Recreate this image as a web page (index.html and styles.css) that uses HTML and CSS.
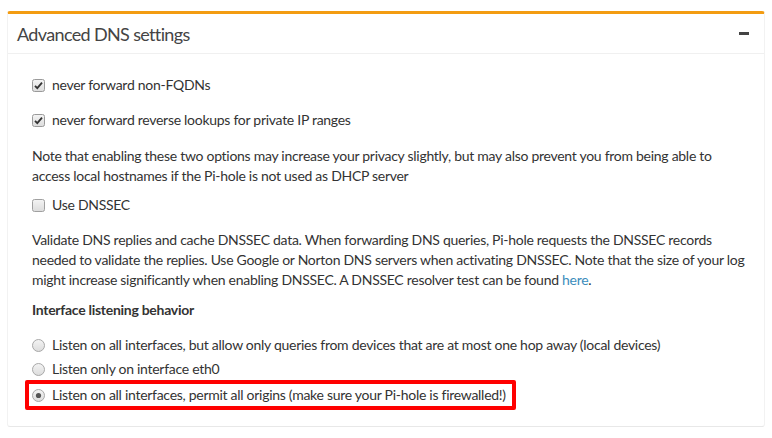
FILE: index.html
```html
<!DOCTYPE html>
<html>
<head>
<meta charset="utf-8">
<link rel="stylesheet" href="styles.css">
</head>
<body>
<div class="box">
  <div class="box-header">
    <h3 class="box-title">Advanced DNS settings</h3>
    <span class="collapse-btn"></span>
  </div>
  <div class="box-body">
    <div class="check row1">
      <svg class="cb" width="13" height="13" viewBox="0 0 13 13"><defs><linearGradient id="g1" x1="0" y1="0" x2="0" y2="1"><stop offset="0" stop-color="#f4f4f4"/><stop offset="1" stop-color="#dcdcdc"/></linearGradient></defs><rect x="0.5" y="0.5" width="12" height="12" rx="2" fill="url(#g1)" stroke="#9a9a9a"/><path d="M3 6.8 L5.3 9.2 L10 3.6" fill="none" stroke="#333" stroke-width="1.8"/></svg>
      <span>never forward non-FQDNs</span>
    </div>
    <div class="check row2">
      <svg class="cb" width="13" height="13" viewBox="0 0 13 13"><rect x="0.5" y="0.5" width="12" height="12" rx="2" fill="url(#g1)" stroke="#9a9a9a"/><path d="M3 6.8 L5.3 9.2 L10 3.6" fill="none" stroke="#333" stroke-width="1.8"/></svg>
      <span>never forward reverse lookups for private IP ranges</span>
    </div>
    <p class="note note1">Note that enabling these two options may increase your privacy slightly, but may also prevent you from being able to access local hostnames if the Pi-hole is not used as DHCP server</p>
    <div class="check row3">
      <svg class="cb" width="13" height="13" viewBox="0 0 13 13"><rect x="0.5" y="0.5" width="12" height="12" rx="2" fill="url(#g1)" stroke="#a0a0a0"/></svg>
      <span>Use DNSSEC</span>
    </div>
    <p class="note note2">Validate DNS replies and cache DNSSEC data. When forwarding DNS queries, Pi-hole requests the DNSSEC records needed to validate the replies. Use Google or Norton DNS servers when activating DNSSEC. Note that the size of your log might increase significantly when enabling DNSSEC. A DNSSEC resolver test can be found <a href="#">here</a>.</p>
    <div class="label">Interface listening behavior</div>
    <div class="radio r1">
      <svg class="rb" width="13" height="13" viewBox="0 0 13 13"><circle cx="6.5" cy="6.5" r="6" fill="url(#g1)" stroke="#a8a8a8"/></svg>
      <span>Listen on all interfaces, but allow only queries from devices that are at most one hop away (local devices)</span>
    </div>
    <div class="radio r2">
      <svg class="rb" width="13" height="13" viewBox="0 0 13 13"><circle cx="6.5" cy="6.5" r="6" fill="url(#g1)" stroke="#a8a8a8"/></svg>
      <span>Listen only on interface eth0</span>
    </div>
    <div class="highlight">
      <div class="radio r3">
        <svg class="rb" width="13" height="13" viewBox="0 0 13 13"><circle cx="6.5" cy="6.5" r="6" fill="url(#g1)" stroke="#a8a8a8"/><circle cx="6.5" cy="6.5" r="2.6" fill="#555"/></svg>
        <span>Listen on all interfaces, permit all origins (make sure your Pi-hole is firewalled!)</span>
      </div>
    </div>
  </div>
</div>
</body>
</html>
```
FILE: styles.css
```css
html, body {
  margin: 0;
  padding: 0;
  background: #ffffff;
}
body {
  padding: 11px 7px 0 7px;
  font-family: "Lato", "Liberation Sans", sans-serif;
  font-size: 14px;
  letter-spacing: -0.28px;
  color: #333333;
}
.box {
  width: 758px;
  height: 416px;
  box-sizing: border-box;
  border-top: 3px solid #f39c12;
  border-left: 1px solid #f2f2f2;
  border-right: 1px solid #f2f2f2;
  border-bottom: 1px solid #e8e8e8;
  border-radius: 3px;
  background: #fff;
}
.box-header {
  height: 40px;
  box-sizing: border-box;
  padding: 0 15px 0 9px;
  border-bottom: 1px solid #f0f0f0;
  display: flex;
  align-items: center;
  justify-content: space-between;
}
.box-title {
  margin: 0;
  font-size: 18px;
  font-weight: 400;
  letter-spacing: -0.65px;
  color: #444;
  line-height: 20px;
  padding-top: 1px;
}
.collapse-btn {
  display: block;
  width: 10px;
  height: 3px;
  background: #444;
}
.box-body {
  padding: 0 12px 0 24px;
}
.check, .radio {
  display: flex;
  align-items: center;
  height: 20px;
  line-height: 20px;
}
.cb, .rb {
  flex: none;
  margin-right: 7px;
}
.row1 { margin-top: 21px; }
.row2 { margin-top: 15px; }
.note {
  margin: 0;
  line-height: 19.5px;
}
.note1 { margin-top: 16px; }
.row3 { margin-top: 10px; }
.note2 { margin-top: 15px; line-height: 20px; }
.note2 a { color: #3c8dbc; text-decoration: none; }
.label {
  margin-top: 10px;
  font-weight: 700;
  line-height: 20px;
}
.r1 { margin-top: 15px; }
.r2 { margin-top: 4px; }
.highlight {
  margin-top: 1px;
  margin-left: -7px;
  width: fit-content;
  border: 4px solid #ff0000;
  border-radius: 2px;
  padding: 1px 6px 1px 3px;
}
.r3 span { white-space: nowrap; }
```
